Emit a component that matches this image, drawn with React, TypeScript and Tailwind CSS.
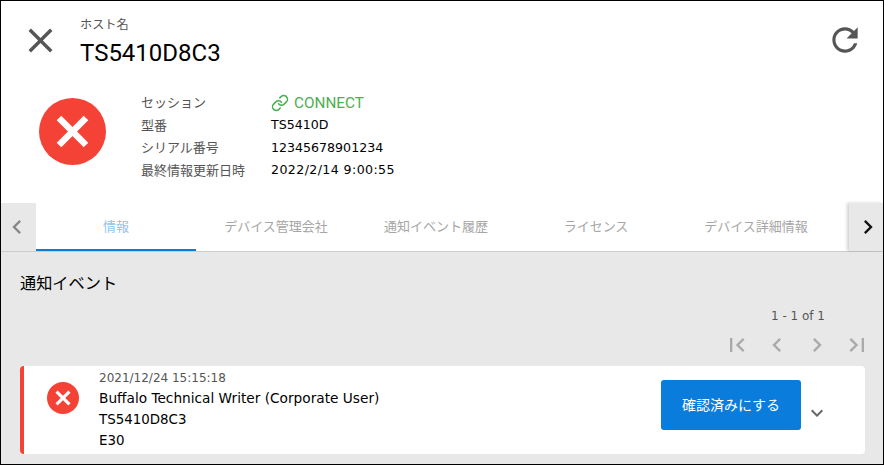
const FONT = "font-['DejaVu_Sans','Noto_Sans_CJK_JP',sans-serif]";

function Cross({ size }: { size: number }) {
  return (
    <svg width={size} height={size} viewBox="0 0 67 67" className="shrink-0">
      <circle cx="33.5" cy="33.5" r="33.5" fill="#f44336" />
      <path d="M20 20L47 47M47 20L20 47" stroke="#fff" strokeWidth="6.5" fill="none" />
    </svg>
  );
}

function Chevron({ dir, color, size = 24 }: { dir: "l" | "r" | "d"; color: string; size?: number }) {
  const d =
    dir === "l"
      ? "M15.41 7.41L14 6l-6 6 6 6 1.41-1.41L10.83 12z"
      : dir === "r"
        ? "M8.59 16.59L10 18l6-6-6-6-1.41 1.41L13.17 12z"
        : "M7.41 8.59L12 13.17l4.59-4.58L18 10l-6 6-6-6z";
  return (
    <svg width={size} height={size} viewBox="0 0 24 24" fill={color}>
      <path d={d} />
    </svg>
  );
}

function Row({ k, children }: { k: string; children: React.ReactNode }) {
  return (
    <div className="flex h-[22.4px] items-center">
      <div className="w-[130px] text-[13px] text-[#555]">{k}</div>
      <div className="text-[12.6px] text-black">{children}</div>
    </div>
  );
}

const tabs = ["情報", "デバイス管理会社", "通知イベント履歴", "ライセンス", "デバイス詳細情報"];

export default function App() {
  return (
    <div className={`flex h-[465px] w-[884px] flex-col overflow-hidden border border-black bg-white ${FONT}`}>
      <div className="flex h-[79px] items-start pl-[19px] pr-[19px] pt-[19px]">
        <svg width="41" height="41" viewBox="0 0 24 24" fill="#555" className="shrink-0">
          <path d="M19 6.41L17.59 5 12 10.59 6.41 5 5 6.41 10.59 12 5 17.59 6.41 19 12 13.41 17.59 19 19 17.59 13.41 12z" />
        </svg>
        <div className="-mt-[4px] ml-[19px] flex flex-col">
          <div className="text-[12.2px] leading-[18px] text-[#555]">ホスト名</div>
          <div className="mt-[3px] font-['Roboto','Noto_Sans_CJK_JP',sans-serif] text-[24px] leading-[32px] text-black">TS5410D8C3</div>
        </div>
        <svg width="38" height="38" viewBox="0 0 24 24" fill="#555" className="ml-auto mt-[1px] shrink-0">
          <path d="M17.65 6.35C16.2 4.9 14.21 4 12 4c-4.42 0-7.99 3.58-7.99 8s3.57 8 7.99 8c3.73 0 6.84-2.55 7.73-6h-2.08c-.82 2.33-3.04 4-5.65 4-3.31 0-6-2.69-6-6s2.69-6 6-6c1.66 0 3.14.69 4.22 1.78L13 11h7V4l-2.35 2.35z" />
        </svg>
      </div>

      <div className="flex h-[123px] items-start pl-[38px]">
        <div className="mt-[18px]">
          <Cross size={67} />
        </div>
        <div className="ml-[35px] mt-[12px] flex flex-col">
          <Row k="セッション">
            <span className="flex items-center gap-[5px] font-['Roboto','Noto_Sans_CJK_JP',sans-serif] text-[15.3px] text-[#4caf50]">
              <svg width="18" height="18" viewBox="0 0 24 24" fill="none" stroke="#4caf50" strokeWidth="2" strokeLinecap="round" strokeLinejoin="round">
                <path d="M10 13a5 5 0 0 0 7.54.54l3-3a5 5 0 0 0-7.07-7.07l-1.72 1.71" />
                <path d="M14 11a5 5 0 0 0-7.54-.54l-3 3a5 5 0 0 0 7.07 7.07l1.71-1.71" />
              </svg>
              CONNECT
            </span>
          </Row>
          <Row k="型番">TS5410D</Row>
          <Row k="シリアル番号">12345678901234</Row>
          <Row k="最終情報更新日時"><span className="tracking-[0.4px]">2022/2/14 9:00:55</span></Row>
        </div>
      </div>

      <div className="flex h-[49px] border-b border-[#ccc]">
        <div className="flex w-[35px] items-center justify-center bg-[#e8e8e8] pr-[3px]">
          <Chevron dir="l" color="#888" size={28} />
        </div>
        <div className="flex flex-1">
          {tabs.map((t, i) => (
            <div
              key={t}
              className={`flex w-[160px] items-center justify-center text-[13px] ${i === 0 ? "border-b-2 border-[#0a7cdb] pt-[2px] text-[#90c4ec]" : "text-[#a6a6a6]"}`}
            >
              {t}
            </div>
          ))}
        </div>
        <div className="flex w-[34px] items-center justify-center bg-[#e8e8e8] pl-[3px] shadow-[-2px_0_3px_rgba(0,0,0,0.18)]">
          <Chevron dir="r" color="#111" size={28} />
        </div>
      </div>

      <div className="flex flex-1 flex-col bg-[#e8e8e8] pl-[19px] pr-[18px]">
        <div className="mt-[20px] text-[16.2px] leading-[24px] text-black">通知イベント</div>
        <div className="mt-[11px] flex justify-end pr-[40px] text-[12px] leading-[18px] text-[#555]">1 - 1 of 1</div>
        <div className="-mr-[6px] mt-[6px] flex justify-end gap-[12px]">
          <svg width="28" height="28" viewBox="0 0 24 24" fill="#aaa"><path d="M18.41 16.59L13.82 12l4.59-4.59L17 6l-6 6 6 6zM6 6h2v12H6z" /></svg>
          <Chevron dir="l" color="#aaa" size={28} />
          <Chevron dir="r" color="#aaa" size={28} />
          <svg width="28" height="28" viewBox="0 0 24 24" fill="#aaa"><path d="M5.59 7.41L10.18 12l-4.59 4.59L7 18l6-6-6-6zM16 6h2v12h-2z" /></svg>
        </div>
        <div className="mt-[7px] flex h-[88px] items-center rounded-[4px] border-l-[4px] border-[#f44336] bg-white">
          <div className="-mt-[24px] ml-[23px]">
            <Cross size={32} />
          </div>
          <div className="ml-[20px] flex flex-col">
            <div className="text-[12px] leading-[18px] text-[#555]">2021/12/24 15:15:18</div>
            <div className="text-[13.7px] leading-[23px] text-black">Buffalo Technical Writer (Corporate User)</div>
            <div className="text-[13.4px] leading-[19px] text-black">TS5410D8C3</div>
            <div className="text-[13.4px] leading-[23px] text-black">E30</div>
          </div>
          <button className="-mt-[10px] ml-auto flex h-[50px] w-[140px] items-center justify-center rounded-[3px] bg-[#0a7cdb] text-[14px] text-white">
            確認済みにする
          </button>
          <div className="ml-[4px] mr-[36px] mt-[6px]">
            <Chevron dir="d" color="#666" />
          </div>
        </div>
      </div>
    </div>
  );
}
